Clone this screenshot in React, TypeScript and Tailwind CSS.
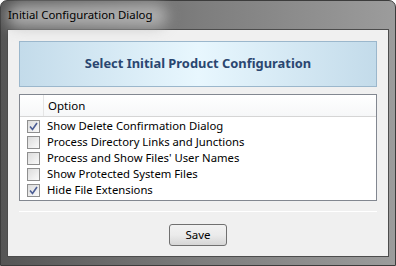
import { useState } from "react";

const options = [
  { label: "Show Delete Confirmation Dialog", checked: true },
  { label: "Process Directory Links and Junctions", checked: false },
  { label: "Process and Show Files' User Names", checked: false },
  { label: "Show Protected System Files", checked: false },
  { label: "Hide File Extensions", checked: true },
];

function CheckBox({ checked, onClick }: { checked: boolean; onClick: () => void }) {
  return (
    <span
      onClick={onClick}
      className="w-[13px] h-[13px] border border-[#8f8f8f] bg-gradient-to-br from-[#dcdcdc] to-[#fafafa] flex items-center justify-center shrink-0"
    >
      {checked && (
        <svg width="9" height="9" viewBox="0 0 9 9">
          <path d="M1 4.5 L3.5 7.5 L8 1" fill="none" stroke="#4b5d94" strokeWidth="1.6" />
        </svg>
      )}
    </span>
  );
}

export default function App() {
  const [items, setItems] = useState(options);

  const toggle = (i: number) => {
    setItems(items.map((it, idx) => (idx === i ? { ...it, checked: !it.checked } : it)));
  };

  return (
    <div className="w-[396px] h-[266px] overflow-hidden bg-white font-['Noto_Sans',sans-serif]">
      <div className="w-[396px] h-[266px] rounded-t-[7px] border border-[#3c3c3c] bg-gradient-to-r from-[#555555] via-[#7d7d7d] to-[#9c9c9c] flex flex-col px-[6px] pb-[8px]">
        {/* title bar */}
        <div className="h-[28px] flex items-center relative">
          <div className="absolute left-0 top-[3px] w-[160px] h-[24px] rounded-full bg-[#bdbdbd] blur-[7px] opacity-80" />
          <span className="relative pl-[1px] text-[11.4px] text-black">Initial Configuration Dialog</span>
        </div>

        {/* client area */}
        <div className="flex-1 bg-[#f0f0f0] border border-[#4c4c4c] px-[11px] pt-[11px] flex flex-col">
          <div className="h-[46px] border border-[#9bb7cc] bg-gradient-to-r from-[#c3dbea] via-[#e8f7fe] to-[#c3dbea] flex items-center justify-center">
            <span className="text-[12.9px] font-bold text-[#2a4670]">Select Initial Product Configuration</span>
          </div>

          <div className="mt-[7px] h-[107px] border border-[#828790] bg-white flex flex-col">
            <div className="h-[22px] flex bg-gradient-to-b from-white to-[#f6f7f8] border-b border-[#d5d5d5]">
              <div className="w-[24px] border-r border-[#e5e5e5]" />
              <div className="flex items-center pl-[4px] text-[11.5px] text-black">Option</div>
            </div>
            <div className="flex flex-col pt-[1px]">
              {items.map((it, i) => (
                <div key={it.label} className="h-[16px] flex items-center pl-[7px]">
                  <CheckBox checked={it.checked} onClick={() => toggle(i)} />
                  <span className="ml-[7px] text-[11.3px] text-black leading-none">{it.label}</span>
                </div>
              ))}
            </div>
          </div>

          <div className="mt-[10px] h-[1px] bg-[#a0a0a0] border-b border-white" />

          <div className="flex justify-center mt-[12px]">
            <button className="w-[58px] h-[22px] rounded-[3px] border border-[#707070] bg-gradient-to-b from-[#f2f2f2] via-[#ebebeb] to-[#d6d6d6] text-[11.5px] text-black">
              Save
            </button>
          </div>
        </div>
      </div>
    </div>
  );
}
